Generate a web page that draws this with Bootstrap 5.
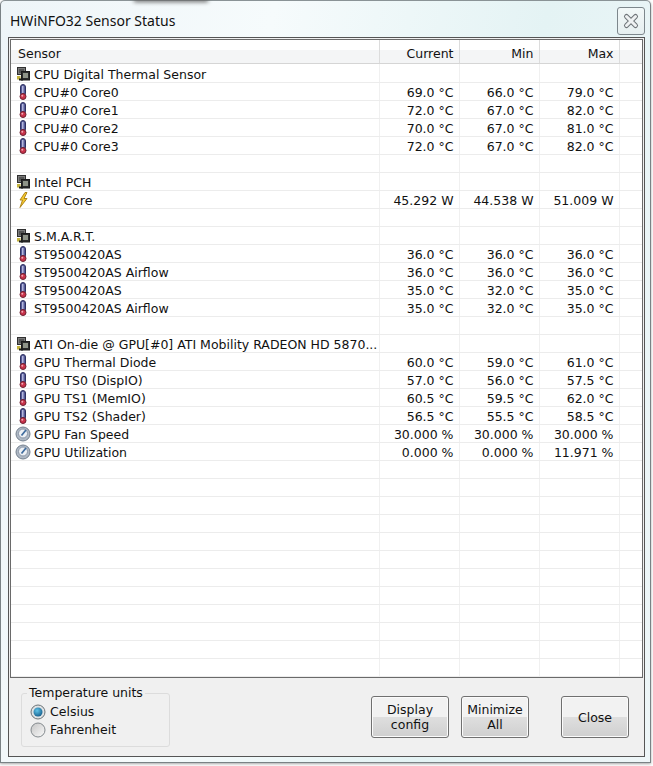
<!DOCTYPE html>
<html lang="en">
<head>
<meta charset="utf-8">
<title>HWiNFO32 Sensor Status</title>
<link href="https://cdn.jsdelivr.net/npm/bootstrap@5.3.0/dist/css/bootstrap.min.css" rel="stylesheet">
<style>
html,body{margin:0;background:#fff;width:653px;height:766px;overflow:hidden}
body{font-family:"DejaVu Sans",Verdana,sans-serif;font-size:12.5px;color:#111}
.win-frame{position:relative;width:651px;height:763px;padding:1px 5px 6px 7px;border:1px solid #7a8285;border-top:1px solid #8a9396;border-radius:5px 5px 0 0;background:linear-gradient(100deg,#eef5f8 0%,#f6fbfc 35%,#e4f3f4 70%,#eef6f8 100%);box-shadow:0 1px 3px rgba(0,0,0,.35)}
.behind-glow{position:absolute;left:133px;top:-3px;width:74px;height:4px;background:#666;filter:blur(2px)}
.title-row{height:35px;font-family:"Noto Sans",sans-serif;font-size:14px;color:#111;padding-left:2px}
.close-x{width:28px;height:28px;margin-top:5px;border:1px solid #7d878c;border-radius:3px;background:linear-gradient(#f2f8f8,#e6eff0)}
.client{height:720px;background:#f0f0f0;border:1px solid #555;padding:1px}
.list-box{height:639px;border:1px solid #6a6a6a;background:#fff;overflow:hidden}
.sensor-table{table-layout:fixed;width:631px;margin:0;border-collapse:collapse;font-size:12.5px;color:#111}
.col-name{width:368px}
.col-val{width:80px}
.col-end{width:23px}
.sensor-table th,.sensor-table td{padding:2px 5px 0 0;height:18px;line-height:15px;border:0;border-right:1px solid #f0f0f0;border-bottom:1px solid #ececec;font-weight:400;text-align:right;white-space:nowrap;overflow:hidden;box-shadow:none;background:#fff;color:#111;vertical-align:middle}
.sensor-table th{height:23px;padding-top:5px;border-bottom:1px solid #d5d5d5;border-right:1px solid #dcdcdc;background:linear-gradient(#fff 0 42%,#f4f5f6 42%,#f4f5f6)}
.sensor-table tbody tr:first-child td{height:19px;padding-top:3px}
.sensor-table th:first-child{text-align:left;padding-left:7px}
.sensor-table td:first-child{text-align:left;padding-left:4px}
.cell-inner{display:flex;align-items:center;gap:3px;height:15px}
.cell-inner svg{flex:none}
.bottom-bar{height:76px;padding:0 14px 0 11px}
.temp-group{position:relative;width:149px;height:54px;margin-top:15px;border:1px solid #dcdcdc;border-radius:3px;padding:9px 0 0 8px}
.temp-group .legend-txt{position:absolute;left:5px;top:-9px;background:#f0f0f0;padding:0 2px;line-height:16px}
.radio-line{display:flex;align-items:center;gap:4px;height:18px;line-height:18px}
.push-btn{border:1px solid #707070;border-radius:3px;background:linear-gradient(#f2f2f2 0 49%,#dfdfdf 49%,#cfcfcf);font-size:12.5px;line-height:15px;color:#111;padding:0;height:42px;box-shadow:inset 0 0 0 1px #fbfbfb}
.btn-display{width:78px;margin-right:12px}
.btn-min{width:68px;margin-right:32px}
.btn-close-win{width:68px}
.btn-row{padding-top:18px}
</style>
</head>
<body>
<svg width="0" height="0" class="d-block" aria-hidden="true">
<defs>
<symbol id="ic-chip" viewBox="0 0 16 16">
<rect x="2.500" y="1.500" width="8" height="7" fill="#7c7c7c" stroke="#303030"/>
<rect x="4" y="3" width="5" height="4" fill="#555"/>
<rect x="6.500" y="5.500" width="8" height="8.500" fill="#2c2c2c" stroke="#1c1c1c"/>
<rect x="8" y="7" width="5" height="5" fill="#8f9488"/>
<rect x="2" y="10" width="3.500" height="3.500" fill="#c4b33e"/>
<rect x="4" y="12.500" width="4" height="2" fill="#1c1c1c"/>
</symbol>
<symbol id="ic-therm" viewBox="0 0 16 16">
<rect x="5.500" y="0.500" width="5" height="11" rx="2.500" fill="#565b98" stroke="#2f3160"/>
<rect x="7" y="2" width="1.500" height="7" fill="#b4b7dc"/>
<circle cx="8" cy="12.500" r="3" fill="#c8324a" stroke="#6c2030"/>
<circle cx="7.300" cy="11.800" r="1" fill="#f3a8b4"/>
</symbol>
<symbol id="ic-bolt" viewBox="0 0 16 16">
<path d="M10 .5 5 8h2.500L5 15.500 12 6.500H9L12 .5z" fill="#f4c92e" stroke="#a87c10" stroke-width=".9" stroke-linejoin="round"/>
</symbol>
<symbol id="ic-gauge" viewBox="0 0 16 16">
<circle cx="8" cy="8" r="7" fill="#aeb8c4" stroke="#75818f"/>
<circle cx="8" cy="7.500" r="4.500" fill="#eef1f5" stroke="#8b97a8"/>
<path d="M6.500 9.500 11 4" stroke="#3f6c9e" stroke-width="1.800"/>
</symbol>
</defs>
</svg>
<div class="win-frame">
<div class="behind-glow"></div>
<div class="title-row d-flex justify-content-between">
<span class="d-block pt-2">HWiNFO32 Sensor Status</span>
<div class="close-x d-flex align-items-center justify-content-center">
<svg width="18" height="18" viewBox="0 0 18 18"><path d="M4.500 4.500 13.500 13.500M13.500 4.500 4.500 13.500" fill="none" stroke="#6e7478" stroke-width="5" stroke-linecap="round"/><path d="M4.500 4.500 13.500 13.500M13.500 4.500 4.500 13.500" fill="none" stroke="#eef1f2" stroke-width="3" stroke-linecap="round"/></svg>
</div>
</div>
<div class="client">
<div class="list-box">
<table class="table sensor-table">
<colgroup><col class="col-name"><col class="col-val"><col class="col-val"><col class="col-val"><col class="col-end"></colgroup>
<thead><tr><th>Sensor</th><th>Current</th><th>Min</th><th>Max</th><th></th></tr></thead>
<tbody id="sensor-rows"></tbody>
</table>
</div>
<div class="bottom-bar d-flex">
<div class="temp-group">
<span class="legend-txt">Temperature units</span>
<div class="radio-line">
<svg width="16" height="16" viewBox="0 0 16 16"><defs><radialGradient id="rb" cx=".4" cy=".35" r=".8"><stop offset="0" stop-color="#5ec3e8"/><stop offset="1" stop-color="#0a4f7e"/></radialGradient></defs><circle cx="8" cy="8" r="7" fill="#dfe2e4" stroke="#6c7478"/><circle cx="8" cy="8" r="4.500" fill="url(#rb)"/></svg>
<span>Celsius</span></div>
<div class="radio-line">
<svg width="16" height="16" viewBox="0 0 16 16"><defs><linearGradient id="rg" x1="0" y1="0" x2="1" y2="1"><stop offset="0" stop-color="#c4c4c4"/><stop offset="1" stop-color="#fbfbfb"/></linearGradient></defs><circle cx="8" cy="8" r="7" fill="url(#rg)" stroke="#848a8e"/></svg>
<span>Fahrenheit</span></div>
</div>
<div class="d-flex ms-auto align-items-start btn-row">
<button type="button" class="btn push-btn btn-display">Display<br>config</button>
<button type="button" class="btn push-btn btn-min">Minimize<br>All</button>
<button type="button" class="btn push-btn btn-close-win">Close</button>
</div>
</div>
</div>
</div>
<script>
var rows=[
["c","CPU Digital Thermal Sensor"],
["t","CPU#0 Core0","69.0 °C","66.0 °C","79.0 °C"],
["t","CPU#0 Core1","72.0 °C","67.0 °C","82.0 °C"],
["t","CPU#0 Core2","70.0 °C","67.0 °C","81.0 °C"],
["t","CPU#0 Core3","72.0 °C","67.0 °C","82.0 °C"],
[],
["c","Intel PCH"],
["b","CPU Core","45.292 W","44.538 W","51.009 W"],
[],
["c","S.M.A.R.T."],
["t","ST9500420AS","36.0 °C","36.0 °C","36.0 °C"],
["t","ST9500420AS Airflow","36.0 °C","36.0 °C","36.0 °C"],
["t","ST9500420AS","35.0 °C","32.0 °C","35.0 °C"],
["t","ST9500420AS Airflow","35.0 °C","32.0 °C","35.0 °C"],
[],
["c","ATI On-die @ GPU[#0] ATI Mobility RADEON HD 5870..."],
["t","GPU Thermal Diode","60.0 °C","59.0 °C","61.0 °C"],
["t","GPU TS0 (DispIO)","57.0 °C","56.0 °C","57.5 °C"],
["t","GPU TS1 (MemIO)","60.5 °C","59.5 °C","62.0 °C"],
["t","GPU TS2 (Shader)","56.5 °C","55.5 °C","58.5 °C"],
["g","GPU Fan Speed","30.000 %","30.000 %","30.000 %"],
["g","GPU Utilization","0.000 %","0.000 %","11.971 %"]
];
while(rows.length<34)rows.push([]);
var ic={c:"ic-chip",t:"ic-therm",b:"ic-bolt",g:"ic-gauge"},h="";
rows.forEach(function(r){
h+="<tr><td>"+(r[0]?'<div class="cell-inner"><svg width="16" height="16"><use href="#'+ic[r[0]]+'"/></svg><span>'+r[1]+"</span></div>":"")+"</td><td>"+(r[2]||"")+"</td><td>"+(r[3]||"")+"</td><td>"+(r[4]||"")+"</td><td></td></tr>";
});
document.getElementById("sensor-rows").innerHTML=h;
</script>
</body>
</html>
